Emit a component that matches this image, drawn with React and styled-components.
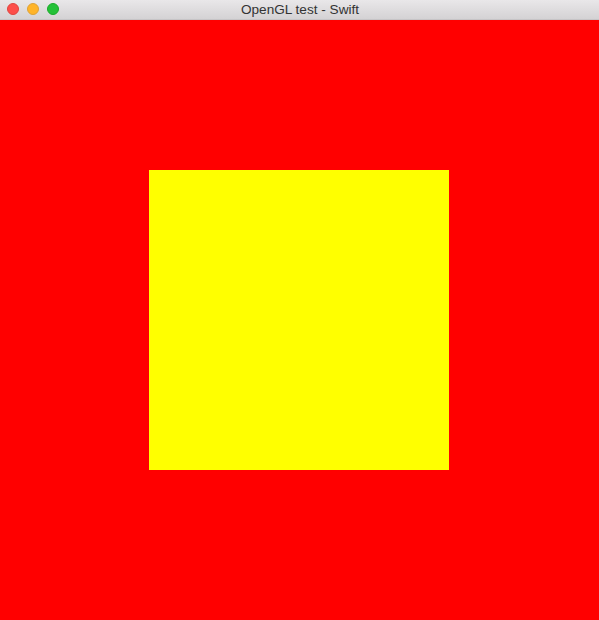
import React from "react";
import styled, { createGlobalStyle } from "styled-components";

const Global = createGlobalStyle`
  html, body { margin: 0; padding: 0; background: #ff0000; }
  body { width: 599px; height: 620px; overflow: hidden; }
`;

const Window = styled.div`
  width: 599px;
  height: 620px;
  display: flex;
  flex-direction: column;
`;

const TitleBar = styled.div`
  position: relative;
  height: 19px;
  flex: none;
  background: linear-gradient(#e9e7e9, #d4d2d4);
  border-bottom: 1px solid #c6c4c6;
  display: flex;
  align-items: center;
  justify-content: center;
`;

const Lights = styled.div`
  position: absolute;
  left: 7px;
  top: 3px;
  display: flex;
  gap: 8px;
`;

const Light = styled.span`
  width: 12px;
  height: 12px;
  border-radius: 50%;
  box-sizing: border-box;
  background: ${(p) => p.$fill};
  border: 0.5px solid ${(p) => p.$edge};
`;

const Title = styled.span`
  font-family: "Helvetica Neue", "Liberation Sans", Arial, sans-serif;
  font-size: 13.6px;
  color: #333333;
  line-height: 19px;
  margin-left: 1px;
`;

const Canvas = styled.div`
  flex: 1;
  background: #ff0000;
  display: flex;
  align-items: center;
  justify-content: center;
`;

const Square = styled.div`
  width: 300px;
  height: 300px;
  margin-right: 1px;
  background: #ffff00;
`;

export default function App() {
  return (
    <>
      <Global />
      <Window>
        <TitleBar>
          <Lights>
            <Light $fill="#fd4e4a" $edge="#e0443e" />
            <Light $fill="#ffb429" $edge="#dea236" />
            <Light $fill="#24c138" $edge="#1aab29" />
          </Lights>
          <Title>OpenGL test - Swift</Title>
        </TitleBar>
        <Canvas>
          <Square />
        </Canvas>
      </Window>
    </>
  );
}
